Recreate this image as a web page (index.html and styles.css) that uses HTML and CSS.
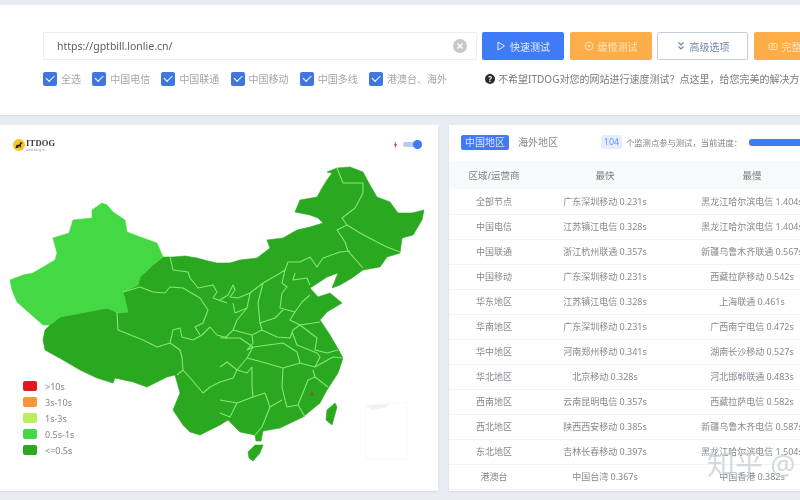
FILE: index.html
```html
<!DOCTYPE html>
<html lang="zh-CN">
<head>
  <meta charset="UTF-8">
  <title>ITDOG 网站速度测试</title>
  <link rel="stylesheet" href="styles.css">
</head>
<body>

  <div class="top-card">
    <div class="search-row">
      <div class="url-input">
        <span class="url-text">https://gptbill.lonlie.cn/</span>
        <svg class="clear-icon" viewBox="0 0 14 14"><circle cx="7" cy="7" r="7" fill="#c6c8cc"/><path d="M4.5 4.5l5 5M9.5 4.5l-5 5" stroke="#fff" stroke-width="1.4"/></svg>
      </div>
      <button class="btn btn-blue">
        <svg class="btn-icon" viewBox="0 0 10 10"><path d="M2 1l6.5 4L2 9z" fill="none" stroke="currentColor"/></svg>快速测试
      </button>
      <button class="btn btn-orange">
        <svg class="btn-icon" viewBox="0 0 10 10"><circle cx="5" cy="5" r="4" fill="none" stroke="currentColor"/><circle cx="5" cy="5" r="1.2" fill="currentColor"/></svg>缓慢测试
      </button>
      <button class="btn btn-plain">
        <svg class="btn-icon" viewBox="0 0 10 10"><path d="M2.5 1.5L5 4l2.5-2.5M2.5 5.5L5 8l2.5-2.5" fill="none" stroke="currentColor" stroke-width="1.2"/></svg>高级选项
      </button>
      <button class="btn btn-orange btn-last">
        <svg class="btn-icon" viewBox="0 0 10 10"><rect x="1" y="2.5" width="8" height="6" rx="1" fill="none" stroke="currentColor"/><circle cx="5" cy="5.5" r="1.6" fill="none" stroke="currentColor"/></svg>完整测试
      </button>
    </div>
    <div class="option-row">
      <label class="check"><span class="box"></span>全选</label>
      <label class="check"><span class="box"></span>中国电信</label>
      <label class="check"><span class="box"></span>中国联通</label>
      <label class="check"><span class="box"></span>中国移动</label>
      <label class="check"><span class="box"></span>中国多线</label>
      <label class="check"><span class="box"></span>港澳台、海外</label>
      <div class="help">
        <span class="help-icon">?</span>不希望ITDOG对您的网站进行速度测试？点这里，给您完美的解决方案！
      </div>
    </div>
  </div>

  <div class="panels">
    <div class="map-card">
      <div class="map-head">
        <div class="logo">
          <svg class="logo-mark" viewBox="0 0 12 12"><circle cx="6" cy="6" r="6" fill="#f7c325"/><path d="M2.5 9l1-3 3-.5 1-2.5 2 1-1.500 1.500V9H7.500V7.500h-2L5 9z" fill="#222"/></svg>
          <div class="logo-words">
            <div class="logo-text">ITDOG</div>
            <div class="logo-sub">www.itdog.cn</div>
          </div>
        </div>
        <div class="map-switch">
          <svg class="bolt" viewBox="0 0 6 10"><path d="M3.500 0L1 5.500h1.500L2 10l3-6H3.500z" fill="#b0585c"/></svg>
          <span class="toggle"><span class="knob"></span></span>
        </div>
      </div>

      <svg class="map" viewBox="0 155 438 336">
        <!-- 其他省份 -->
        <path class="dark" d="M163 257L173 257 185 256 197 258 208 261 217 263 230 263 240 260 257 258 270 248 267 240 283 238 297 230 310 227 323 223 318 218 310 215 295 212 300 200 317 197 322 188 327 180 332 173 327 172 337 168 350 167 363 172 370 185 377 197 390 202 398 213 412 213 424 210 422 220 413 235 402 238 400 253 387 257 380 267 363 270 352 278 340 285 332 288 338 273 327 277 318 283 310 288 318 297 330 293 342 303 327 312 320 320 330 335 337 347 343 358 338 373 327 390 320 403 303 417 280 428 263 431 261 441 256 441 255 435 240 432 228 420 220 425 200 435 190 432 183 425 173 410 180 393 175 375 167 377 147 387 133 382 115 378 113 383 97 378 80 370 63 360 45 350 43 340 45 330 50 325 60 317 97 310 107 308 118 313 128 312 123 292 138 285 140 277 153 265z"/>
        <path class="dark" d="M248 452L255 445 263 445 260 453 253 461 249 458z"/>
        <path class="dark" d="M335 403L337 407 332 425 326 420 327 410z"/>
        <!-- 新疆 -->
        <path class="light" d="M102 203L92 210 92 218 73 220 69 233 53 238 57 253 55 260 33 273 23 275 10 280 12 290 17 302 26 310 43 325 50 325 60 317 97 310 107 308 118 313 128 312 123 292 138 285 140 277 153 265 163 257 157 243 143 238 127 232 125 220 113 212 107 205z"/>
        <!-- 省界 -->
        <g class="borders">
          <path d="M170 257L173 270 188 272 190 278 198 288 213 285 217 292 213 298 227 303"/>
          <path d="M123 292L140 287 153 292 165 293 170 287 183 288 200 298 208 310 203 323 195 327 200 335"/>
          <path d="M117 312L118 330 143 340 157 347 170 343 173 330 180 328 182 337 193 340 202 335 210 327 217 335 228 338"/>
          <path d="M170 343L180 350 182 357 183 370 177 375"/>
          <path d="M183 370L192 380 203 393 210 387 220 382 233 378 237 370 247 358 253 347"/>
          <path d="M220 300L228 295 233 285 235 290 230 297 238 298 250 293 263 283 277 275 285 270 288 262 300 262 310 257 317 267 323 258 340 252 350 251"/>
          <path d="M337 168L343 183 363 183 363 193 355 208 342 218 347 225 337 230 345 242 348 251 363 268"/>
          <path d="M347 225L360 233 377 242 387 247 400 252"/>
          <path d="M285 270L282 283 287 287 282 293 280 308 295 312 302 302 310 295"/>
          <path d="M295 273L293 280 307 278 310 285"/>
          <path d="M263 283L258 303 260 323 275 318 283 310"/>
          <path d="M250 293L247 308 237 320 233 330 225 338"/>
          <path d="M233 303L235 313 247 308"/>
          <path d="M295 312L290 320 300 325 320 322"/>
          <path d="M260 323L262 330 277 337 290 338 293 330 300 325 317 338 315 350 327 353 338 350"/>
          <path d="M233 330L252 335 262 330"/>
          <path d="M252 335L253 343 247 350 253 347 283 343 297 352 300 363"/>
          <path d="M220 338L240 338 253 347"/>
          <path d="M247 358L262 362 283 368 300 363 315 367 333 357 343 358"/>
          <path d="M292 332L297 345 317 353 320 357 315 367"/>
          <path d="M283 368L282 387 285 400 287 407 298 405 308 380 315 377 313 370"/>
          <path d="M315 377L328 387"/>
          <path d="M298 405L305 417"/>
          <path d="M252 367L252 387 253 397 265 393 270 407 282 400"/>
          <path d="M270 407L262 427 255 435"/>
          <path d="M220 400L237 403 253 397"/>
          <path d="M220 413L230 417 237 403"/>
          <path d="M252 367L247 373 237 370 227 362 220 367"/>
        </g>
        <circle class="hot" cx="312" cy="394" r="1.500"/>
        <!-- 南海诸岛 -->
        <rect class="inset" x="366" y="403" width="41" height="56"/>
        <path class="inset-land" d="M366 405L391 404 384 408 372 410z"/>
      </svg>

      <ul class="legend">
        <li><span class="swatch swatch-red"></span>&gt;10s</li>
        <li><span class="swatch swatch-orange"></span>3s-10s</li>
        <li><span class="swatch swatch-lime"></span>1s-3s</li>
        <li><span class="swatch swatch-light"></span>0.5s-1s</li>
        <li><span class="swatch swatch-dark"></span>&lt;=0.5s</li>
      </ul>
    </div>

    <div class="table-card">
      <div class="table-head">
        <span class="tab tab-active">中国地区</span>
        <span class="tab">海外地区</span>
        <span class="badge">104</span>
        <span class="progress-label">个监测点参与测试，当前进度：</span>
        <span class="progress"></span>
      </div>
      <table class="speed-table">
        <thead>
          <tr><th class="col-area">区域/运营商</th><th class="col-fast">最快</th><th class="col-slow">最慢</th></tr>
        </thead>
        <tbody>
          <tr><td>全部节点</td><td>广东深圳移动 0.231s</td><td>黑龙江哈尔滨电信 1.404s</td></tr>
          <tr><td>中国电信</td><td>江苏镇江电信 0.328s</td><td>黑龙江哈尔滨电信 1.404s</td></tr>
          <tr><td>中国联通</td><td>浙江杭州联通 0.357s</td><td>新疆乌鲁木齐联通 0.567s</td></tr>
          <tr><td>中国移动</td><td>广东深圳移动 0.231s</td><td>西藏拉萨移动 0.542s</td></tr>
          <tr><td>华东地区</td><td>江苏镇江电信 0.328s</td><td>上海联通 0.461s</td></tr>
          <tr><td>华南地区</td><td>广东深圳移动 0.231s</td><td>广西南宁电信 0.472s</td></tr>
          <tr><td>华中地区</td><td>河南郑州移动 0.341s</td><td>湖南长沙移动 0.527s</td></tr>
          <tr><td>华北地区</td><td>北京移动 0.328s</td><td>河北邯郸联通 0.483s</td></tr>
          <tr><td>西南地区</td><td>云南昆明电信 0.357s</td><td>西藏拉萨电信 0.582s</td></tr>
          <tr><td>西北地区</td><td>陕西西安移动 0.385s</td><td>新疆乌鲁木齐电信 0.587s</td></tr>
          <tr><td>东北地区</td><td>吉林长春移动 0.397s</td><td>黑龙江哈尔滨电信 1.504s</td></tr>
          <tr><td>港澳台</td><td>中国台湾 0.367s</td><td>中国香港 0.382s</td></tr>
        </tbody>
      </table>
      <div class="watermark">知乎 @</div>
    </div>
  </div>

</body>
</html>
```

FILE: styles.css
```css
* {
  box-sizing: border-box;
}

body {
  margin: 0;
  width: 800px;
  height: 500px;
  overflow: hidden;
  background: #e9edf3;
  font-family: "Noto Sans", "Noto Sans CJK SC", sans-serif;
  color: #858a91;
  padding-top: 5px;
}

/* the reference is a soft, scaled-up capture */
.top-card,
.panels {
  filter: blur(0.35px);
}

.top-card {
  background: #fff;
  height: 110px;
  padding: 27px 0 0 43px;
  box-shadow: 0 1px 2px #d5dae1;
}

.search-row {
  display: flex;
  gap: 5.5px;
  width: 800px;
}

.url-input {
  flex: none;
  width: 433.5px;
  height: 28px;
  border: 1px solid #eceef2;
  border-radius: 2px;
  padding: 0 9px 0 13px;
  display: flex;
  align-items: center;
  justify-content: space-between;
}

.url-text {
  font-size: 10.5px;
  color: #5a5e64;
}

.clear-icon {
  width: 14px;
  height: 14px;
}

.btn {
  flex: none;
  width: 82px;
  height: 28px;
  border: none;
  border-radius: 2px;
  font-family: inherit;
  font-size: 10px;
  display: flex;
  align-items: center;
  justify-content: center;
  gap: 4px;
  padding: 0;
}

.btn-icon {
  width: 10px;
  height: 10px;
}

.btn-blue {
  background: #3f7bf6;
  color: #e4edff;
}

.btn-orange {
  background: #fdad47;
  color: #fde3bd;
}

.btn-plain {
  width: 91px;
  background: #fff;
  border: 1px solid #c5cede;
  color: #6f86ad;
}

.option-row {
  display: flex;
  align-items: center;
  margin-top: 11px;
  font-size: 10px;
  white-space: nowrap;
}

.check {
  display: flex;
  align-items: center;
  gap: 4px;
  margin-right: 11.2px;
  color: #a2a7ae;
}

.box {
  width: 14px;
  height: 14px;
  border-radius: 2px;
  background: #3f77dd;
  position: relative;
}

.box::after {
  content: "";
  position: absolute;
  left: 3px;
  top: 3.5px;
  width: 7px;
  height: 3.5px;
  border-left: 1.5px solid #fff;
  border-bottom: 1.5px solid #fff;
  transform: rotate(-45deg);
}

.help {
  display: flex;
  align-items: center;
  gap: 3px;
  margin-left: 27px;
  color: #777b81;
}

.help-icon {
  width: 10px;
  height: 10px;
  border-radius: 50%;
  background: #2b2b2b;
  color: #fff;
  font-size: 8px;
  font-weight: bold;
  line-height: 10px;
  text-align: center;
}

.panels {
  display: flex;
  gap: 11px;
  margin-top: 10px;
}

.map-card {
  flex: none;
  width: 438px;
  height: 366px;
  background: #fff;
  position: relative;
  box-shadow: 0 1px 2px #d5dae1;
}

.map-head {
  height: 30px;
  display: flex;
  align-items: center;
  justify-content: space-between;
  padding: 9px 16px 0 13px;
}

.logo {
  display: flex;
  align-items: center;
  gap: 1px;
}

.logo-mark {
  width: 12px;
  height: 12px;
}

.logo-text {
  font-family: "Liberation Serif", serif;
  font-weight: bold;
  font-size: 8.5px;
  line-height: 10px;
  color: #3a3a3a;
  letter-spacing: 0.2px;
}

.logo-sub {
  font-size: 3px;
  line-height: 4px;
  color: #999;
}

.map-switch {
  display: flex;
  align-items: center;
  gap: 5px;
}

.bolt {
  width: 5px;
  height: 8px;
}

.toggle {
  width: 19px;
  height: 5px;
  border-radius: 3px;
  background: #b7ccf5;
  position: relative;
  display: block;
}

.knob {
  position: absolute;
  right: 0;
  top: -2px;
  width: 9px;
  height: 9px;
  border-radius: 50%;
  background: #3f7bf6;
}

.map {
  display: block;
  width: 438px;
  height: 336px;
}

.dark {
  fill: #2aa820;
  stroke: #2aa820;
  stroke-width: 0.6;
  stroke-linejoin: round;
}

.light {
  fill: #44d944;
  stroke: #44d944;
  stroke-width: 0.6;
  stroke-linejoin: round;
}

.borders path {
  fill: none;
  stroke: #86e870;
  stroke-width: 1.1;
  stroke-linejoin: round;
}

.hot {
  fill: #8c5a14;
}

.inset {
  fill: #fff;
  stroke: #f8f9fa;
  stroke-width: 1;
}

.inset-land {
  fill: #f0f1f2;
}

.legend {
  position: absolute;
  left: 23px;
  top: 253px;
  margin: 0;
  padding: 0;
  list-style: none;
  font-size: 9px;
  color: #80848a;
}

.legend li {
  display: flex;
  align-items: center;
  gap: 8px;
  height: 16px;
}

.swatch {
  width: 14px;
  height: 10px;
  border-radius: 2px;
}

.swatch-red { background: #e4181c; }
.swatch-orange { background: #f89535; }
.swatch-lime { background: #bdec63; }
.swatch-light { background: #44d944; }
.swatch-dark { background: #2aa820; }

.table-card {
  flex: none;
  width: 400px;
  height: 366px;
  background: #fff;
  position: relative;
  overflow: hidden;
  box-shadow: 0 1px 2px #d5dae1;
}

.table-head {
  height: 36px;
  display: flex;
  align-items: center;
  padding: 0 0 2px 12px;
  font-size: 10px;
  white-space: nowrap;
}

.tab {
  flex: none;
  width: 40px;
  height: 15px;
  line-height: 15px;
  text-align: center;
  border-radius: 2px;
  margin-right: 9px;
}

.tab-active {
  width: 48px;
  background: #3f7bf6;
  color: #d6e4ff;
}

.badge {
  flex: none;
  width: 21px;
  height: 14px;
  line-height: 14px;
  text-align: center;
  border-radius: 2px;
  background: #e3edfd;
  color: #6a94e6;
  margin: 0 4px 0 34px;
  font-size: 9px;
}

.progress-label {
  flex: none;
  color: #7d8289;
  width: 123px;
  font-size: 8.3px;
}

.progress {
  flex: none;
  width: 60px;
  height: 7px;
  border-radius: 3px;
  background: #3f7bf6;
}

.speed-table {
  width: 384px;
  border-collapse: collapse;
  table-layout: fixed;
  font-size: 9px;
  text-align: center;
}

.col-area { width: 90px; }
.col-fast { width: 132px; }
.col-slow { width: 162px; }

.speed-table th {
  height: 28px;
  padding: 0;
  background: #f8f9fa;
  font-weight: normal;
  font-size: 9.5px;
  color: #7b8087;
}

.speed-table td {
  height: 25px;
  padding: 0;
  border-bottom: 1px solid #f1f3f5;
  white-space: nowrap;
}

.watermark {
  position: absolute;
  left: 258px;
  top: 322px;
  font-size: 28px;
  line-height: 34px;
  white-space: nowrap;
  color: rgba(200, 205, 210, 0.75);
}
```
